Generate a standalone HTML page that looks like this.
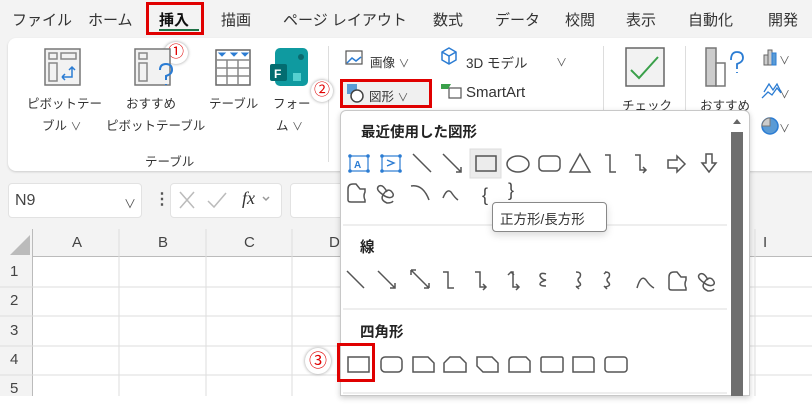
<!DOCTYPE html>
<html><head><meta charset="utf-8"><style>
*{margin:0;padding:0;box-sizing:border-box}
body{width:812px;height:416px;overflow:hidden;background:#fff;font-family:"Liberation Sans","Noto Sans CJK JP",sans-serif;color:#222;position:relative}
.a{position:absolute;white-space:nowrap}
.tab{font-size:15px;top:9px;color:#333}
.t13{font-size:12.5px;color:#333}
.b{font-weight:bold;font-size:14.5px}
.cv{font-size:11px;color:#555}
</style></head><body>
<div class="a" style="left:0;top:0;width:812px;height:396px;background:#f3f3f3"></div>
<!-- tabs -->
<div class="a tab" style="left:12px">ファイル</div>
<div class="a tab" style="left:88px">ホーム</div>
<div class="a tab" style="left:159px;font-weight:bold;color:#111">挿入</div>
<div class="a" style="left:159px;top:29px;width:40px;height:2px;background:#1e7145"></div>
<div class="a" style="left:146px;top:2px;width:58px;height:33px;border:3px solid #e00000"></div>
<div class="a tab" style="left:221px">描画</div>
<div class="a tab" style="left:283px">ページ レイアウト</div>
<div class="a tab" style="left:433px">数式</div>
<div class="a tab" style="left:495px">データ</div>
<div class="a tab" style="left:565px">校閲</div>
<div class="a tab" style="left:626px">表示</div>
<div class="a tab" style="left:688px">自動化</div>
<div class="a tab" style="left:768px">開発</div>
<!-- ribbon -->
<div class="a" style="left:8px;top:38px;width:812px;height:133px;background:#fff;border-radius:8px;box-shadow:0 1px 2px #ccc"></div>
<div class="a" style="left:328px;top:46px;width:1px;height:116px;background:#ddd"></div>
<div class="a" style="left:603px;top:46px;width:1px;height:116px;background:#ddd"></div>
<div class="a" style="left:685px;top:46px;width:1px;height:116px;background:#ddd"></div>
<div class="a t13" style="left:27px;top:93px">ピボットテー</div>
<div class="a t13" style="left:42px;top:115px">ブル <span class="cv">∨</span></div>
<div class="a t13" style="left:126px;top:93px">おすすめ</div>
<div class="a t13" style="left:106px;top:115px">ピボットテーブル</div>
<div class="a t13" style="left:209px;top:93px">テーブル</div>
<div class="a t13" style="left:273px;top:93px">フォー</div>
<div class="a t13" style="left:276px;top:115px">ム <span class="cv">∨</span></div>
<div class="a t13" style="left:145px;top:151px">テーブル</div>
<div class="a t13" style="left:370px;top:52px">画像 <span class="cv">∨</span></div>
<div class="a t13" style="left:466px;top:52px;font-size:13.5px">3D モデル</div>
<div class="a cv" style="left:556px;top:54px">∨</div>
<div class="a" style="left:340px;top:79px;width:92px;height:29px;border:3px solid #e00000;background:#f0f0f0"></div>
<div class="a t13" style="left:369px;top:86px">図形 <span class="cv">∨</span></div>
<div class="a t13" style="left:466px;top:84px;font-size:15px">SmartArt</div>
<div class="a t13" style="left:622px;top:95px">チェック</div>
<div class="a t13" style="left:700px;top:95px">おすすめ</div>
<div class="a cv" style="left:779px;top:52px">∨</div>
<div class="a cv" style="left:779px;top:86px">∨</div>
<div class="a cv" style="left:779px;top:120px">∨</div>
<!-- circled numbers -->
<div class="a" style="left:164px;top:42px;width:24px;height:22px;border-radius:50%;background:#fff;box-shadow:0 0 3px #999;color:#e00000;font-size:16px;text-align:center;line-height:22px">①</div>
<div class="a" style="left:311px;top:80px;width:22px;height:22px;border-radius:50%;background:#fff;box-shadow:0 0 3px #999;color:#e00000;font-size:16px;text-align:center;line-height:22px">②</div>
<!-- formula bar -->
<div class="a" style="left:8px;top:183px;width:134px;height:35px;background:#fff;border-radius:4px;border:1px solid #e2e2e2"></div>
<div class="a" style="left:15px;top:192px;font-size:16px;color:#444">N9</div>
<div class="a cv" style="left:124px;top:195px;font-size:12px">∨</div>
<div class="a" style="left:154px;top:189px;font-size:16px;font-weight:bold;color:#555">⋮</div>
<div class="a" style="left:170px;top:183px;width:112px;height:35px;background:#fff;border-radius:4px;border:1px solid #e2e2e2"></div>
<div class="a" style="left:242px;top:188px;font-size:18px;font-style:italic;font-family:'Liberation Serif',serif;color:#333">fx</div>
<div class="a" style="left:290px;top:183px;width:60px;height:35px;background:#fff;border-radius:4px;border:1px solid #e2e2e2"></div>
<!-- grid -->
<div class="a" style="left:0;top:229px;width:812px;height:167px;background:#fff"></div>
<div class="a" style="left:0;top:229px;width:812px;height:28px;background:#f3f3f3;border-bottom:1px solid #bbb"></div>
<div class="a" style="left:0;top:229px;width:33px;height:167px;background:#f3f3f3;border-right:1px solid #bbb"></div>
<div class="a" style="left:72px;top:234px;font-size:15px;color:#444">A</div>
<div class="a" style="left:158px;top:234px;font-size:15px;color:#444">B</div>
<div class="a" style="left:244px;top:234px;font-size:15px;color:#444">C</div>
<div class="a" style="left:329px;top:234px;font-size:15px;color:#444">D</div>
<div class="a" style="left:763px;top:234px;font-size:15px;color:#444">I</div>
<div class="a" style="left:10px;top:263px;font-size:15px;color:#444">1</div>
<div class="a" style="left:10px;top:292px;font-size:15px;color:#444">2</div>
<div class="a" style="left:10px;top:322px;font-size:15px;color:#444">3</div>
<div class="a" style="left:10px;top:351px;font-size:15px;color:#444">4</div>
<div class="a" style="left:10px;top:380px;font-size:15px;color:#444">5</div>
<svg class="a" style="left:0;top:0" width="812" height="416" viewBox="0 0 812 416" fill="none" stroke="#555" stroke-width="1.5">
<g stroke="#ddd" stroke-width="1">
<line x1="119" y1="229" x2="119" y2="396"/><line x1="206" y1="229" x2="206" y2="396"/><line x1="292" y1="229" x2="292" y2="396"/><line x1="755" y1="229" x2="755" y2="396"/>
<line x1="0" y1="287" x2="812" y2="287"/><line x1="0" y1="316" x2="812" y2="316"/><line x1="0" y1="346" x2="812" y2="346"/><line x1="0" y1="375" x2="812" y2="375"/>
</g>
<polygon points="10,255 30,255 30,235" fill="#bbb" stroke="none"/>
<path d="M180 192 L194 208 M194 192 L180 208 M208 201 L214 207 L226 193" stroke="#bbb"/>
<path d="M263 197 l3 3 l3 -3" stroke="#999"/>
<rect x="45" y="49" width="35" height="36" fill="#f2f2f2" stroke="#777"/>
<rect x="49" y="53" width="8" height="6" stroke="#888"/><rect x="61" y="53" width="15" height="6" stroke="#888"/><rect x="49" y="63" width="8" height="18" stroke="#888"/>
<path d="M62 77 h10 v-10 M69 70 l3 -3 l3 3 M62 77 l3 -3 M62 77 l3 3" stroke="#2b7cd3"/>
<rect x="135" y="49" width="35" height="36" fill="#f2f2f2" stroke="#777"/>
<rect x="139" y="53" width="8" height="6" stroke="#888"/><rect x="139" y="63" width="8" height="18" stroke="#888"/>
<path d="M160 70 q0 -6 6 -6 q6 0 6 6 q0 4 -6 6 v4 M166 84 v1" stroke="#2b7cd3" stroke-width="2"/>
<rect x="216" y="50" width="34" height="35" fill="#fff" stroke="#666"/>
<path d="M216 60 h34 M216 68 h34 M216 76 h34 M227 60 v25 M238 60 v25" stroke="#888"/>
<path d="M219 53 l3 3 l3 -3z M231 53 l3 3 l3 -3z M242 53 l3 3 l3 -3z" fill="#2b7cd3" stroke="#2b7cd3" stroke-width="1"/>
<rect x="275" y="48" width="33" height="38" rx="5" fill="#0f9aa0" stroke="none"/>
<rect x="270" y="64" width="17" height="17" rx="2" fill="#036c70" stroke="none"/>
<text x="274" y="78" fill="#fff" stroke="none" font-size="12" font-weight="bold" font-family="Liberation Sans">F</text>
<circle cx="301" cy="57" r="3" fill="#0b6a6e" stroke="none"/><rect x="293" y="73" width="8" height="8" fill="#55d0d0" stroke="none"/>
<rect x="346" y="51" width="16" height="13" stroke="#555" stroke-width="1.2"/><path d="M347 63 l5 -5 l4 3 l5 -4" stroke="#2b7cd3"/>
<path d="M449 48 l7 4 v8 l-7 4 l-7 -4 v-8z M442 52 l7 4 l7 -4 M449 56 v8" stroke="#2b7cd3" stroke-width="1.5"/>
<rect x="347" y="84" width="10" height="10" fill="#5b9bd5" stroke="none"/><circle cx="357" cy="96" r="6" fill="#fff" stroke="#444"/>
<path d="M441 84 h10 l-3 5 h-7z" fill="#3aa04a" stroke="none"/><rect x="449" y="88" width="12" height="10" fill="#fff" stroke="#555" stroke-width="1.2"/>
<rect x="626" y="48" width="38" height="38" fill="#f2f2f2" stroke="#666"/><path d="M631 70 l8 8 l19 -21" stroke="#3aa04a" stroke-width="2"/>
<rect x="706" y="48" width="10" height="38" fill="#ccc" stroke="#777"/><rect x="716" y="63" width="9" height="23" fill="#fff" stroke="#777"/>
<path d="M731 60 q0 -8 6 -8 q6 0 6 6 q0 4 -6 6 v5 M737 72 v1" stroke="#2b7cd3" stroke-width="1.8"/>
<path d="M764 55 h4 v10 h-4z M768 50 h4 v15 h-4z" fill="#ccc" stroke="#666" stroke-width="1"/><rect x="772" y="53" width="4" height="12" fill="#5b9bd5" stroke="#2b7cd3" stroke-width="1"/>
<path d="M764 92 l5 -8 l4 6 l4 -6 l4 8 M762 98 l6 -6 l4 3 l5 -7 l4 5" stroke="#2b7cd3" stroke-width="1.3"/>
<circle cx="770" cy="126" r="8" fill="#5b9bd5" stroke="#2b7cd3"/><path d="M770 126 v-8 a8 8 0 0 0 -8 8z" fill="#ccc" stroke="#777" stroke-width="1"/>
</svg>
<!-- menu -->
<div class="a" style="left:340px;top:110px;width:410px;height:286px;background:#fff;border:1px solid #c8c8c8;border-radius:6px 6px 0 0;box-shadow:0 2px 6px rgba(0,0,0,.2)"></div>
<div class="a b" style="left:361px;top:121px">最近使用した図形</div>
<div class="a b" style="left:360px;top:236px">線</div>
<div class="a b" style="left:360px;top:321px">四角形</div>
<div class="a" style="left:731px;top:132px;width:12px;height:264px;background:#6e6e6e"></div>
<svg class="a" style="left:0;top:0" width="812" height="416" viewBox="0 0 812 416" fill="none" stroke="#555" stroke-width="1.5">
<path d="M733 124 l4 -5 l4 5z" fill="#666" stroke="none"/>
<g stroke="#ddd" stroke-width="1"><line x1="343" y1="225" x2="727" y2="225"/><line x1="343" y1="309" x2="727" y2="309"/><line x1="343" y1="393" x2="727" y2="393"/></g>
<rect x="470" y="149" width="31" height="29" fill="#ececec" stroke="#ddd" stroke-width="1"/>
<rect x="350" y="156" width="18" height="15" stroke="#2b7cd3" stroke-width="1.2"/><text x="354" y="168" font-size="10" fill="#2b7cd3" stroke="none" font-family="Liberation Sans" font-weight="bold">A</text>
<g fill="#2b7cd3" stroke="none"><circle cx="350" cy="156" r="1.8"/><circle cx="368" cy="156" r="1.8"/><circle cx="350" cy="171" r="1.8"/><circle cx="368" cy="171" r="1.8"/><circle cx="382" cy="156" r="1.8"/><circle cx="400" cy="156" r="1.8"/><circle cx="382" cy="171" r="1.8"/><circle cx="400" cy="171" r="1.8"/></g>
<rect x="382" y="156" width="18" height="15" stroke="#2b7cd3" stroke-width="1.2"/><path d="M387 160 l7 3 l-7 3" stroke="#2b7cd3" stroke-width="1.4"/>
<path d="M413 154 l18 18 M443 154 l18 18 M456 172 h5 v-5"/>
<rect x="476" y="156" width="20" height="15"/>
<ellipse cx="518" cy="164" rx="11" ry="8"/>
<rect x="539" y="156" width="21" height="15" rx="4"/>
<path d="M580 154 l-10 18 h20z"/>
<path d="M605 155 h5 v17 h6"/>
<path d="M635 155 h5 v15 h6 M643 167 l3 3 l-3 3"/>
<path d="M668 160 h9 v-4 l8 8 l-8 8 v-4 h-9z"/>
<path d="M706 154 h6 v9 h4 l-7 9 l-7 -9 h4z"/>
<path d="M348 200 v-11 q0 -5 5 -5 h3 l4 5 h5 v3 q-2 4 0 8 v2 h-14 q-3 0 -3 -2z"/>
<path d="M387 192 q-4 -8 -8 -6 q-4 3 3 8 q6 5 10 3 q3 -2 -1 -6 q-4 -3 -8 4 q-3 5 4 8 q5 0 6 -2"/>
<path d="M411 186 q12 -2 18 14"/>
<path d="M443 198 q4 -10 8 -6 q4 6 7 8"/>
<text x="482" y="201" font-size="18" fill="#444" stroke="none" font-family="Liberation Sans">{</text>
<text x="508" y="196" font-size="18" fill="#444" stroke="none" font-family="Liberation Sans">}</text>
<path d="M347 271 l17 17 M378 271 l17 17 M390 288 h5 v-5"/>
<path d="M411 270 l18 18 M411 270 v5 M411 270 h5 M429 288 h-5 M429 288 v-5"/>
<path d="M443 272 h5 v16 h6"/>
<path d="M475 272 h5 v15 h6 M483 284 l3 3 l-3 3"/>
<path d="M508 275 l3 -3 l3 3 M511 272 h2 v15 h6 M516 284 l3 3 l-3 3"/>
<path d="M546 274 q-6 -2 -6 2 q2 4 6 4 q-6 2 -6 4 q0 2 6 2"/>
<path d="M576 272 q6 0 4 5 q-4 3 0 6 q2 3 -4 4 M576 286 l3 3"/>
<path d="M606 272 l-2 2 M605 272 q6 0 4 5 q-4 3 0 6 q2 3 -4 4 M604 286 l3 3"/>
<path d="M637 288 q4 -14 9 -8 q4 6 8 8"/>
<path d="M669 288 v-11 q0 -5 5 -5 h3 l4 5 h5 v3 q-2 4 0 8 v2 h-14 q-3 0 -3 -2z"/>
<path d="M708 280 q-4 -8 -8 -6 q-4 3 3 8 q6 5 10 3 q3 -2 -1 -6 q-4 -3 -8 4 q-3 5 4 8 q5 0 6 -2"/>
<rect x="348" y="357" width="21" height="15"/>
<rect x="381" y="357" width="21" height="15" rx="4"/>
<path d="M413 357 h15 l6 6 v9 h-21z"/>
<path d="M450 357 h10 l6 6 v9 h-22 v-9z"/>
<path d="M477 357 h15 l6 6 v9 h-15 l-6 -6z"/>
<path d="M509 372 v-11 q0 -4 4 -4 h13 l4 4 v11z"/>
<rect x="541" y="357" width="22" height="15" rx="1.5"/>
<path d="M573 357 h18 q3 0 3 3 v12 h-21z"/>
<rect x="605" y="357" width="22" height="15" rx="3"/>
</svg>
<div class="a" style="left:337px;top:343px;width:38px;height:39px;border:3px solid #e00000"></div>
<div class="a" style="left:305px;top:348px;width:26px;height:26px;border-radius:50%;background:#fff;box-shadow:0 0 3px #999;color:#e00000;font-size:18px;text-align:center;line-height:26px">③</div>
<div class="a" style="left:492px;top:202px;width:115px;height:30px;background:#fff;border:1px solid #888;border-radius:4px;box-shadow:0 3px 8px rgba(0,0,0,.15);font-size:13.5px;color:#333;padding:5px 0 0 7px">正方形/長方形</div>
</body></html>
